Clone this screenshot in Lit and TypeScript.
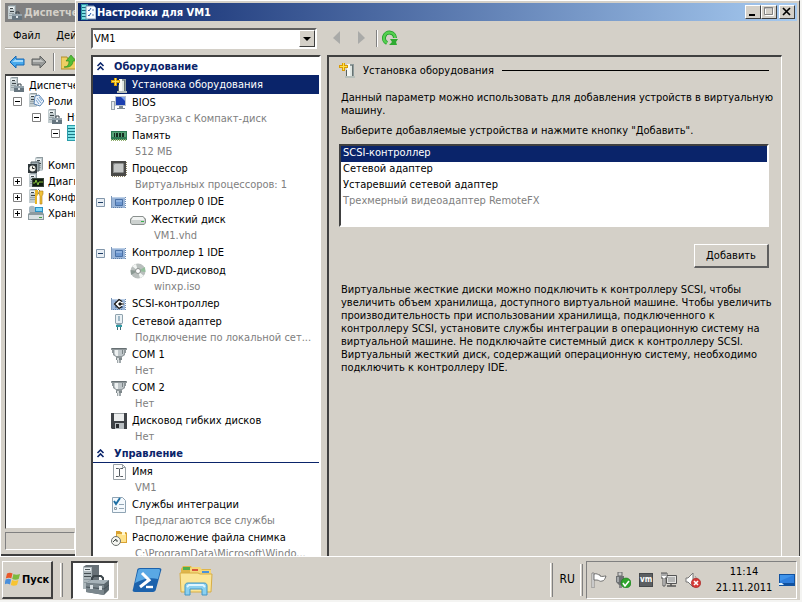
import { LitElement, html, svg, css, nothing, TemplateResult } from "lit";
import { customElement, property, state } from "lit/decorators.js";
import { classMap } from "lit/directives/class-map.js";

/* ---------- icons, all drawn on a 16 x 16 grid ---------- */

const tower = svg`
  <path d="M1 1l2-1h6v12l-1 2H1z" fill="#8f9ba0"/>
  <path d="M1 1h7v13H1z" fill="#c3cdd0"/>
  <path d="M2 2h5v2H2z" fill="#eef3f4"/><path d="M3 3h3v1H3zM3 6h4v1H3z" fill="#3c4548"/>
  <path d="M2 8h5v1H2zM2 10h5v1H2z" fill="#98a4a8"/>`;

const ideCard = svg`
  <path d="M0 2h1v12H0z" fill="#7d97b8"/>
  <path d="M1 3h13v11H1z" fill="#9ab5d8"/><path d="M1 3h13v1H1z" fill="#bccfe6"/>
  <path d="M4.500 5.500h7v6h-7z" fill="#6c96cf" stroke="#4a71a6"/>
  <path d="M5 6h6v2H5z" fill="#8fb1de"/>
  <path d="M14.500 3v11" stroke="#6d8bb0" stroke-dasharray="1 1"/>
  <path d="M2 13.500h10" stroke="#5f7fa8" stroke-dasharray="1 1"/>`;

const comPort = svg`
  <path d="M0 1h16v2h-1v3h-1v2l-3 2v1H5v-1L2 8V6H1V3H0z" fill="#8f979a"/>
  <path d="M1 1h14v1H1z" fill="#666f72"/><path d="M3 3h10v4l-2 2H5L3 7z" fill="#bfc6c9"/>
  <path d="M4 3h3v6H5L4 7z" fill="#eef1f1"/><path d="M11 3h1v4h-1z" fill="#7b8487"/>
  <path d="M5 11h6v2H5z" fill="#7e878a"/><path d="M6 11h2v2H6z" fill="#d5dadb"/>
  <path d="M6 13h4v3H6z" fill="#a0a8ab"/><path d="M7 13h1v3H7z" fill="#dfe3e4"/>`;

const glyphs: Record<string, TemplateResult> = {
  manager: svg`${tower}
    <path d="M9 9V7h3v2" fill="none" stroke="#38444c"/>
    <path d="M5 9h10v6H5z" fill="#66757f"/><path d="M5 9h10v2H5z" fill="#93a2ab"/>
    <path d="M9 11h2v2H9z" fill="#dfe6ea"/>`,
  vmSettings: svg`
    <path d="M1 0h7v16H1z" fill="#2c97a5"/><path d="M2 1h4v14H2z" fill="#7fe0e6"/>
    <path d="M2 3h5v1H2zM2 6h5v1H2zM2 9h5v1H2zM2 12h5v1H2z" fill="#176b7c"/>
    <path d="M6 2h8l2 2v11H6z" fill="#f8fbff" stroke="#7a93b2"/>
    <path d="M8 6l1 1 2-3M8 11l1 1 2-3" fill="none" stroke="#2458a8"/>
    <path d="M12 6h2M12 11h2" stroke="#6683ac"/>`,
  roles: svg`${tower}
    <path d="M7 3l4-1 5 6-4 5-6-2z" fill="#e9f1fa" stroke="#5e87b4"/>
    <path d="M9 5l4 5M8 7l3 4M11 4l3 4" stroke="#7aa5d2"/>`,
  vmHost: svg`
    <path d="M1 0h11v16H1z" fill="#2b9daa"/><path d="M2 1h7v14H2z" fill="#7ee3e8"/>
    <path d="M2 3h9v1H2zM2 6h9v1H2zM2 9h9v1H2zM2 12h9v1H2z" fill="#187685"/>`,
  components: svg`
    <g transform="translate(6 0)">${tower}</g>
    <path d="M3 5h8v9H3z" fill="#9eabb0" stroke="#566266"/>
    <path d="M0 7h9v9H0z" fill="#2e3639"/><circle cx="4.500" cy="11.500" r="3" fill="#f2f2ea"/>
    <path d="M4.500 9.500v2h2" fill="none" stroke="#222"/>`,
  diagnostics: svg`${tower}
    <path d="M4 5h12v9H4z" fill="#39463c"/><path d="M5 6h10v7H5z" fill="#101c10"/>
    <path d="M5 10h2l1-3 2 5 1-3h4" fill="none" stroke="#86c13d"/>`,
  configuration: svg`${tower}
    <path d="M7 1h3v5l-1 1v8H7z" fill="#e9b526"/><path d="M10 0l2 2-2 3" stroke="#6a7880" fill="none"/>
    <path d="M11 2h4v3l-1 2v8h-2V7l-1-2z" fill="#f0c23a" stroke="#b07a10" stroke-width=".6"/>`,
  storage: svg`
    <path d="M1 3c0-3 6-3 6 0v4H1z" fill="#a9b9c2"/><path d="M7 2h8v6H7z" fill="#2b91c6"/>
    <path d="M8 3h6v3H8z" fill="#7dd3f3"/><path d="M0 9l2-2h12l2 2v6H0z" fill="#8c9a9f"/>
    <path d="M1 10h14v4H1z" fill="#d9e0e2"/><path d="M11 12h3v1h-3z" fill="#43a042"/>`,
  addHardware: svg`
    <path d="M8 2h7v12H8z" fill="#8e9a9a"/><path d="M8 2h3v12H8z" fill="#f6f8f6"/>
    <path d="M11 4h2v10h-2z" fill="#dfe6e2"/><path d="M13 3h1v11h-1z" fill="#677272"/>
    <path d="M6 14h10v2H6z" fill="#b7bfba"/><path d="M7 8h1v6H7z" fill="#59625f"/>
    <path d="M3 1h3v2h3v3H6v3H3V6H0V3h3z" fill="#d99b06"/>
    <path d="M4 1h1v3h3v1H5v3H4V5H1V4h3z" fill="#ffe34f"/>`,
  bios: svg`
    <path d="M0 6h4v9H0z" fill="#9aa5ad"/><path d="M1 7h2v7H1z" fill="#e4e9ec"/>
    <path d="M4 1h11v10H4z" fill="#b9c2cc"/><path d="M5 2h9v8H5z" fill="#1c3fb0"/>
    <path d="M10 2h4v4z" fill="#7ea2ee"/><path d="M8 11h4v2h2v1H6v-1h2z" fill="#7e8a94"/>`,
  memory: svg`
    <path d="M0 3h16v9H0z" fill="#2d7a53"/><path d="M1 4h14v5H1z" fill="#57a276"/>
    <path d="M3 5h1v4H3zM5 5h2v4H5zM8 5h2v4H8zM11 5h2v4h-2z" fill="#152c20"/>
    <path d="M0 12h16" stroke="#8fae6a" stroke-dasharray="1 1" stroke-width="2"/>`,
  cpu: svg`
    <path d="M0 0h15v15H0z" fill="#4a4a48"/>
    <path d="M1 15.500h14M15.500 1v14" stroke="#8d8566" stroke-dasharray="1 1"/>
    <path d="M2 3l1-1h9l1 1v8l-1 1H2z" fill="#8b8d8c"/><path d="M4 3h8v8H3V4z" fill="#c4c6c5"/>`,
  ide: ideCard,
  hdd: svg`
    <path d="M3 4h10l3 3v4l-2 2H2l-2-2V7z" fill="#8a908e"/>
    <path d="M3 5h10l2 3H1z" fill="#f1f3f2"/><path d="M1 8h14v3l-1 1H2l-1-1z" fill="#ccd1cf"/>
    <path d="M11 9h3v1h-3z" fill="#37b14a"/>`,
  dvd: svg`
    <circle cx="8" cy="8" r="7.500" fill="#b9bfbd"/>
    <path d="M8 8L2 3l4-2zM8 8l6 5-4 2z" fill="#f3f6f4"/>
    <path d="M8 8l7-4 .4 5z" fill="#93bd9b"/><path d="M8 8l-7 4-.4-5z" fill="#8b9993"/>
    <circle cx="8" cy="8" r="2.500" fill="#fff" stroke="#8b918f"/>`,
  scsi: svg`${ideCard}
    <path d="M8 2.500l5.500 5.500L8 13.500 2.500 8z" fill="#fff"/>
    <path d="M11 5.500L8 3.500 3.500 8 8 12.500l3-2" fill="none" stroke="#111" stroke-width="1.300"/>
    <path d="M7 8l2-2 2 2-2 2z" fill="#111"/><path d="M10 8h3" stroke="#111"/>`,
  network: svg`
    <path d="M5 0h6l1 1v8l-2 2H6L4 9V1z" fill="#90a3ae"/><path d="M5 1h6v8H5z" fill="#e9f0f4"/>
    <path d="M7 2h2v5H7z" fill="#a0b8c7"/><path d="M5 11h6v2H5z" fill="#2f9aa3"/>
    <path d="M6 13h1v3H6zM9 13h1v3H9z" fill="#3f6f7a"/>`,
  com: comPort,
  floppy: svg`
    <path d="M0 0h16v16H1l-1-1z" fill="#3f4347"/><path d="M3 0h10v8H3z" fill="#eceeee"/>
    <path d="M3 0h10v1H3z" fill="#9da3a6"/><path d="M4 10h9v6H4z" fill="#b9bfc2"/>
    <path d="M5 11h3v4H5z" fill="#2a2d30"/>`,
  name: svg`
    <path d="M2.500.500h9l3 3v12h-12z" fill="#fdfdfd" stroke="#98a0a6"/>
    <path d="M11.500.500v3h3" fill="none" stroke="#98a0a6"/>
    <path d="M5 4.500h2.500L8.500 5l1-.5H12M8.500 5v7M5 12.500h2.500l1-.5 1 .5H12" fill="none" stroke="#545a60"/>`,
  services: svg`
    <path d="M1.500.500h10l3 3v12h-13z" fill="#f4f9fd" stroke="#8fa4b4"/>
    <path d="M3 4l2 3 4-6" fill="none" stroke="#1d6fa5" stroke-width="2"/>
    <path d="M3.500 10.500h2v2h-2z" fill="none" stroke="#8a9aa6"/>
    <path d="M8 7.500h5M8 11.500h5" stroke="#93a6b5"/>`,
  snapshot: svg`
    <path d="M5 1h4l1 1h5l1 1v10H5z" fill="#d9a232"/><path d="M6 4h9v8H6z" fill="#ffe28a"/>
    <path d="M11 2h3v3h-3z" fill="#fff6cf"/>
    <circle cx="5" cy="11" r="4.500" fill="#f5f6f2" stroke="#6b706c"/>
    <path d="M2 12l3-3v2h2" fill="none" stroke="#3c4441"/>`,
  back: svg`<path d="M1 8l6-6v3h8v6H7v3z" fill="#48a9ec" stroke="#1668b5"/><path d="M3 8l4-3v1h7v2z" fill="#a5dafb"/>`,
  forward: svg`<path d="M15 8L9 2v3H1v6h8v3z" fill="#989a99" stroke="#5f6160"/><path d="M13 8L9 5v1H2v2z" fill="#c3c4c2"/>`,
  up: svg`<path d="M0 3h6l1 2h9v10H0z" fill="#efcf63" stroke="#b08e2c"/>
    <path d="M3 13c4 0 5-3 5-6H5l5-6 5 6h-3c0 4-3 7-9 6z" fill="#53bf36" stroke="#26811a" stroke-width=".6"/>`,
  prev: svg`<path d="M11 1v13L4 8z" fill="#a9aaa8"/>`,
  next: svg`<path d="M5 1v13l7-6z" fill="#a9aaa8"/>`,
  refresh: svg`
    <path d="M5 13A5.500 5.500 0 1 1 13 8" fill="none" stroke="#1d9a28" stroke-width="4"/>
    <path d="M5 13A5.500 5.500 0 1 1 13 8" fill="none" stroke="#55cf4f" stroke-width="2.400"/>
    <path d="M8 9h8l-2 3 1 3H7l3-3z" fill="#2faa31"/>`,
  flag: svg`<path d="M1 1h2v15H1z" fill="#fff" stroke="#666" stroke-width=".7"/>
    <path d="M3 2c3-1 4 1 6 1v1c2 1 4 0 6 0-1 3-2 5-4 5-2 1-3-1-5-1H3z" fill="#fff" stroke="#555" stroke-width=".8"/>`,
  usb: svg`<path d="M3 0h4v4H3z" fill="#ccc" stroke="#666"/><path d="M1 4h8v6l-2 3H4l-3-3z" fill="#6d7072"/>
    <path d="M2 5h2v5H2z" fill="#a4a7a9"/><path d="M4 13h3v3H4z" fill="#888"/>
    <circle cx="11" cy="11" r="5" fill="#2fa52b" stroke="#16751a" stroke-width=".6"/>
    <path d="M8 11l2 3 4-5" fill="none" stroke="#fff" stroke-width="1.600"/>`,
  lan: svg`<path d="M5.500 3.500h10v8h-10z" fill="#e5e5e3" stroke="#555"/><path d="M7 5h7v5H7z" fill="#b6b7b6"/>
    <path d="M6 14h9M10 12v2" stroke="#555" stroke-width="1.500"/>
    <path d="M0 1h6v5H4v8H2V6H0z" fill="#fff" stroke="#555"/><path d="M2 1v3M4 1v3" stroke="#555"/>`,
  speaker: svg`<path d="M1 6h2l5-5v14l-5-5H1z" fill="#fff" stroke="#777"/>
    <path d="M10 4c2 2 2 6 0 8" fill="none" stroke="#999"/>
    <circle cx="11" cy="11" r="4.700" fill="#d63a36" stroke="#a01c1c" stroke-width=".6"/>
    <path d="M9 9l4 4M13 9l-4 4" stroke="#fff" stroke-width="1.600"/>`,
  desktop: svg`<path d="M0 2h16v12H0z" fill="#10519f"/><path d="M1 3h14v8H1z" fill="#2f7fdd"/>
    <path d="M1 3h14L1 9z" fill="#3f93ea"/><path d="M0 11h3l2 2H0z" fill="#d7eefc"/>`,
  windows: svg`
    <path d="M2 2.500C4 1.500 6 1.500 7.500 2.500L6.300 7.500C5 6.500 3 6.500 .8 7.500z" fill="#e8582a"/>
    <path d="M8.500 3C10 4 12.500 4 15 3l-1.300 5C12 9 9 9 7.200 8z" fill="#7cba3d"/>
    <path d="M.6 8.500c2-1 4-1 5.500 0L5 13.500c-1.500-1-3.500-1-5.600 0z" fill="#4a8fdb"/>
    <path d="M7 9c2 1 4 1 6.500 0L12 14c-2 1-4.500 1-6.200 0z" fill="#f7c432"/>`,
};

const icon = (name: string, cls = "i16") =>
  html`<svg class=${cls} viewBox="0 0 16 16" aria-hidden="true">${glyphs[name]}</svg>`;

const chevrons = html`<svg class="chev" viewBox="0 0 8 9" aria-hidden="true">
  <path d="M1 4l3-3 3 3M1 8l3-3 3 3" fill="none" stroke="#0a246a" stroke-width="1.600"/></svg>`;

const shared = css`
  * { box-sizing: border-box; }
  :host { box-sizing: border-box; }
  button, select, a {
    font: inherit; color: inherit; margin: 0; padding: 0; border: 0; border-radius: 0;
    background: none; text-decoration: none;
  }
  ul { list-style: none; margin: 0; padding: 0; }
  svg { display: block; flex: none; }
  .i16 { width: 16px; height: 16px; }
`;

/* ---------- server manager window, mostly covered by the dialog ---------- */

interface Node { label: string; icon: string; depth: number; box?: "+" | "-"; gap?: boolean }

const managerTree: Node[] = [
  { label: "Диспетчер сервера", icon: "manager", depth: 0 },
  { label: "Роли", icon: "roles", depth: 1, box: "-" },
  { label: "Hyper-V", icon: "manager", depth: 2, box: "-" },
  { label: "", icon: "vmHost", depth: 3, box: "-" },
  { label: "Компоненты", icon: "components", depth: 1, gap: true },
  { label: "Диагностика", icon: "diagnostics", depth: 1, box: "+" },
  { label: "Конфигурация", icon: "configuration", depth: 1, box: "+" },
  { label: "Хранилище", icon: "storage", depth: 1, box: "+" },
];

@customElement("manager-window")
export class ManagerWindow extends LitElement {
  static styles = [shared, css`
    :host {
      display: flex; flex-direction: column; min-width: 0; min-height: 0; overflow: hidden;
      padding: 3px 0 0 4px; white-space: nowrap;
      border-left: 1px solid #fff; background: #d4d0c8;
    }
    .title {
      flex: none; display: flex; align-items: center; gap: 1px; height: 19px; padding-left: 2px;
      background: #808080; color: #d4d0c8; font-weight: bold;
    }
    .title span, .row span { min-width: 0; overflow: hidden; }
    .menu { flex: none; display: flex; align-items: center; gap: 16px; height: 26px; padding: 2px 0 0 8px;
      overflow: hidden; border-bottom: 1px solid #b5b1a8; }
    .tools { flex: none; display: flex; align-items: center; gap: 6px; height: 26px; padding-left: 4px;
      border-top: 1px solid #fff; }
    .tools i { flex: none; width: 2px; height: 18px; border-left: 1px solid #808080; border-right: 1px solid #fff; }
    .tree { flex: 1; min-height: 0; overflow: hidden; padding: 1px 0 0 3px; background: #fff;
      border: solid #404040; border-width: 2px 0 0 1px; border-bottom: 1px solid #d4d0c8; }
    .row { display: flex; align-items: center; height: 16px; gap: 4px; }
    .gap { margin-top: 16px; }
    .d1 { padding-left: 4px; } .d2 { padding-left: 23px; } .d3 { padding-left: 42px; }
    .box, .nobox { width: 9px; height: 9px; flex: none; margin-right: 2px; }
    .box svg { width: 9px; height: 9px; }
    .status { flex: none; height: 18px; margin: 3px 0 2px; border: 1px solid; border-color: #808080 #fff #fff #808080; }
    .edge { flex: none; height: 4px; border-bottom: 2px solid #404040; margin-left: -4px; }
  `];

  render() {
    return html`
      <div class="title">${icon("manager")}<span>Диспетчер сервера</span></div>
      <nav class="menu"><button>Файл</button><button>Действие</button></nav>
      <div class="tools">
        <button aria-label="Назад">${icon("back")}</button>
        <button aria-label="Вперед">${icon("forward")}</button>
        <i></i>
        <button aria-label="Вверх">${icon("up")}</button>
      </div>
      <ul class="tree">
        ${managerTree.map((n) => html`
          <li class=${classMap({ row: true, gap: !!n.gap, ["d" + n.depth]: true })}>
            ${n.box
              ? html`<button class="box" aria-label="Развернуть"><svg viewBox="0 0 9 9">
                  <path d="M.5.500h8v8h-8z" fill="#fff" stroke="#808080"/>
                  <path d=${n.box === "+" ? "M2 4.500h5M4.500 2v5" : "M2 4.500h5"} stroke="#000"/></svg></button>`
              : n.depth ? html`<span class="nobox"></span>` : nothing}
            ${icon(n.icon)}<span>${n.label}</span>
          </li>`)}
      </ul>
      <div class="status"></div>
      <div class="edge"></div>`;
  }
}

/* ---------- virtual machine settings dialog ---------- */

interface Item { label: string; icon: string; sub?: string; child?: boolean; open?: boolean }

const sections: { title: string; items: Item[] }[] = [
  {
    title: "Оборудование",
    items: [
      { label: "Установка оборудования", icon: "addHardware" },
      { label: "BIOS", icon: "bios", sub: "Загрузка с Компакт-диск" },
      { label: "Память", icon: "memory", sub: "512 МБ" },
      { label: "Процессор", icon: "cpu", sub: "Виртуальных процессоров: 1" },
      { label: "Контроллер 0 IDE", icon: "ide", open: true },
      { label: "Жесткий диск", icon: "hdd", sub: "VM1.vhd", child: true },
      { label: "Контроллер 1 IDE", icon: "ide", open: true },
      { label: "DVD-дисковод", icon: "dvd", sub: "winxp.iso", child: true },
      { label: "SCSI-контроллер", icon: "scsi" },
      { label: "Сетевой адаптер", icon: "network", sub: "Подключение по локальной сет..." },
      { label: "COM 1", icon: "com", sub: "Нет" },
      { label: "COM 2", icon: "com", sub: "Нет" },
      { label: "Дисковод гибких дисков", icon: "floppy", sub: "Нет" },
    ],
  },
  {
    title: "Управление",
    items: [
      { label: "Имя", icon: "name", sub: "VM1" },
      { label: "Службы интеграции", icon: "services", sub: "Предлагаются все службы" },
      { label: "Расположение файла снимка", icon: "snapshot", sub: "C:\\ProgramData\\Microsoft\\Windo..." },
    ],
  },
];

@customElement("settings-dialog")
export class SettingsDialog extends LitElement {
  @state() private selected = "Установка оборудования";

  static styles = [shared, css`
    :host {
      display: flex; flex-direction: column; min-width: 0; min-height: 0; overflow: hidden;
      padding: 2px 2px 0 2px; background: #d4d0c8;
      border: solid #fff; border-width: 1px 0 0 1px; border-right: 1px solid #404040;
    }
    .title {
      flex: none; display: flex; align-items: center; gap: 1px; height: 18px; padding: 0 2px;
      background: linear-gradient(90deg, #0a246a, #a6caf0); color: #fff; font-weight: bold;
    }
    .title h1 { flex: 1; margin: 0; font: inherit; }
    .ctl { width: 16px; height: 14px; background: #d4d0c8; border: 1px solid; border-color: #fff #404040 #404040 #fff; }
    .ctl svg { width: 14px; height: 12px; }
    .caption { display: flex; }
    .caption .close { margin-left: 2px; }
    .bar { flex: none; display: flex; align-items: center; height: 29px; padding: 5px 0 0 13px; margin-bottom: 5px; }
    .combo { display: grid; width: 226px; height: 21px; background: #fff;
      border: 2px solid; border-color: #606060 #fff #fff #606060; }
    .combo > * { grid-area: 1 / 1; }
    .combo select { appearance: none; padding: 0 20px 0 1px; width: 100%; outline: 0; }
    .drop { justify-self: end; width: 16px; height: 17px; pointer-events: none; background: #d4d0c8;
      border: 1px solid; border-color: #fff #404040 #404040 #fff; }
    .drop svg { width: 14px; height: 15px; }
    .nav { display: flex; align-items: center; gap: 8px; padding-left: 12px; }
    .nav i { width: 2px; height: 17px; margin: 0 -4px 0 -1px; border-left: 1px solid #808080; border-right: 1px solid #fff; }
    .body { flex: 1; min-height: 0; display: grid; grid-template-columns: 230px minmax(0, 1fr); gap: 6px;
      padding: 0 15px 0 13px; }
    .list { overflow: hidden; white-space: nowrap; background: #fff; padding-top: 1px;
      border: solid #404040; border-width: 2px 0 0 2px; border-right: 2px solid #fff; }
    .head { display: flex; align-items: center; gap: 9px; width: 100%; height: 18px; padding-left: 3px;
      border-bottom: 1px solid #0a246a; color: #0a246a; font-weight: bold; text-align: left; }
    .chev { width: 9px; height: 9px; }
    .item { display: grid; grid-template-columns: 10px 16px 1fr; column-gap: 5px; align-items: center;
      grid-template-rows: 18px; padding-left: 3px; cursor: default; }
    .child { padding-left: 22px; }
    .sel { background: #0a246a; color: #fff; }
    .tog { width: 9px; height: 9px; }
    .tog svg { width: 9px; height: 9px; }
    .lab { grid-column: 3; grid-row: 1; text-align: left; line-height: 18px; }
    .item .i16 { grid-column: 2; grid-row: 1; }
    .sub { grid-column: 3; padding-left: 3px; line-height: 13px; height: 15px; color: #808080; }
    .page { display: flex; flex-direction: column; min-width: 0; padding: 5px 12px 0 10px; line-height: 13px;
      border: solid #404040; border-width: 2px 1px 0 2px; border-right-color: #fff; }
    .page h2 { display: flex; align-items: center; gap: 8px; margin: 0; height: 16px; font: inherit; }
    .page h2::after { content: ""; flex: 1; height: 1px; background: #000; }
    .page p { margin: 0 -10px 0 2px; }
    .page .intro { margin-top: 13px; }
    .page label { margin: 7px 0 7px 2px; }
    .devices { display: block; width: 100%; height: 83px; background: #fff; outline: 0; overflow: hidden;
      border: 2px solid; border-color: #404040 #fff #fff #404040; }
    .devices option { height: 16px; min-height: 16px; line-height: 16px; padding: 0 2px; color: #000; }
    .devices option:checked { background: linear-gradient(#0a246a, #0a246a); color: #fff; }
    .devices option:disabled { color: #808080; }
    .add { align-self: flex-end; width: 75px; height: 24px; margin: 17px 0 15px;
      border: solid; border-width: 1px 2px 2px 1px; border-color: #fff #606060 #606060 #fff; background: #d4d0c8; }
  `];

  private item(it: Item) {
    return html`
      <li class=${classMap({ item: true, child: !!it.child, sel: it.label === this.selected })}>
        ${it.open
          ? html`<button class="tog" aria-label="Свернуть"><svg viewBox="0 0 9 9">
              <path d="M.5.500h8v8h-8z" fill="#e8eef4" stroke="#8296aa"/><path d="M2 4.500h5" stroke="#1c3c64"/></svg></button>`
          : nothing}
        ${icon(it.icon)}
        <button class="lab" @click=${() => (this.selected = it.label)}>${it.label}</button>
        ${it.sub ? html`<span class="sub">${it.sub}</span>` : nothing}
      </li>`;
  }

  render() {
    return html`
      <header class="title">
        ${icon("vmSettings")}
        <h1>Настройки для VM1</h1>
        <div class="caption">
          <button class="ctl" aria-label="Свернуть"><svg viewBox="0 0 14 12"><path d="M3 8h6v2H3z"/></svg></button>
          <button class="ctl" aria-label="Развернуть"><svg viewBox="0 0 14 12">
            <path d="M3.500 2.500h8v7h-8z" fill="none" stroke="#fff"/><path d="M2.500 1.500h8v7h-8zM2 2h9" fill="none" stroke="#808080"/></svg></button>
          <button class="ctl close" aria-label="Закрыть"><svg viewBox="0 0 14 12">
            <path d="M3 2l7 7M10 2L3 9" stroke="#000" stroke-width="1.700"/></svg></button>
        </div>
      </header>
      <div class="bar">
        <div class="combo">
          <select aria-label="Виртуальная машина"><option>VM1</option></select>
          <span class="drop"><svg viewBox="0 0 14 15"><path d="M3 6h8l-4 4z"/></svg></span>
        </div>
        <div class="nav">
          <button aria-label="Назад">${icon("prev")}</button>
          <button aria-label="Вперед">${icon("next")}</button>
          <i></i>
          <button aria-label="Обновить">${icon("refresh")}</button>
        </div>
      </div>
      <div class="body">
        <div class="list">
          ${sections.map((s) => html`
            <button class="head">${chevrons}${s.title}</button>
            <ul>${s.items.map((it) => this.item(it))}</ul>`)}
        </div>
        <section class="page">
          <h2>${icon("addHardware")}Установка оборудования</h2>
          <p class="intro">Данный параметр можно использовать для добавления устройств в виртуальную
            машину.</p>
          <label for="devices">Выберите добавляемые устройства и нажмите кнопку "Добавить".</label>
          <select id="devices" class="devices" size="5">
            <option selected>SCSI-контроллер</option>
            <option>Сетевой адаптер</option>
            <option>Устаревший сетевой адаптер</option>
            <option disabled>Трехмерный видеоадаптер RemoteFX</option>
          </select>
          <button class="add">Добавить</button>
          <p>Виртуальные жесткие диски можно подключить к контроллеру SCSI, чтобы<br>
            увеличить объем хранилища, доступного виртуальной машине. Чтобы увеличить<br>
            производительность при использовании хранилища, подключенного к<br>
            контроллеру SCSI, установите службы интеграции в операционную систему на<br>
            виртуальной машине. Не подключайте системный диск к контроллеру SCSI.<br>
            Виртуальный жесткий диск, содержащий операционную систему, необходимо<br>
            подключить к контроллеру IDE.</p>
        </section>
      </div>`;
  }
}

/* ---------- taskbar ---------- */

@customElement("task-bar")
export class TaskBar extends LitElement {
  @property() time = "11:14";
  @property() date = "21.11.2011";

  static styles = [shared, css`
    :host { display: flex; align-items: center; height: 44px; padding: 3px 3px 0 2px;
      background: #d4d0c8; box-shadow: inset 0 1px #fff; }
    .start { display: flex; align-items: center; gap: 1px; width: 51px; height: 38px; padding-left: 2px;
      border: solid; border-width: 1px 2px 2px 1px; border-color: #fff #404040 #404040 #fff;
      font-weight: bold; }
    .grip { width: 3px; height: 34px; border: solid; border-width: 0 1px 0 1px; border-color: #fff #808080 #fff #fff; }
    .g1 { margin: 0 8px 0 7px; }
    .tasks { flex: 1; display: flex; align-items: center; gap: 14px; }
    .active { display: flex; align-items: center; justify-content: center; width: 47px; height: 38px; background: #fff;
      border: solid; border-width: 2px 1px 1px 2px; border-color: #404040 #fff #fff #404040;
      box-shadow: inset -3px 0 #d4d0c8; }
    .big { width: 30px; height: 32px; }
    .ex { width: 34px; height: 32px; margin-left: 3px; }
    .lang { margin: 0 5px 0 7px; font-size: 12px; }
    .g2 { height: 32px; margin-right: 3px; }
    .tray { display: flex; align-items: center; gap: 8px; height: 38px; padding: 0 1px 0 4px;
      border: 1px solid; border-color: #808080 #fff #fff #808080; }
    .vm { width: 14px; height: 14px; background: #5c5f62; color: #fff; font-size: 8px; font-weight: bold;
      line-height: 11px; text-align: center; border: 1px solid #45484a; }
    .clock { width: 62px; margin-left: 4px; margin-right: -4px; text-align: center; line-height: 16px; }
  `];

  render() {
    return html`
      <button class="start">${icon("windows")}Пуск</button>
      <span class="grip g1"></span>
      <div class="tasks">
        <button class="active" aria-label="Диспетчер сервера">
          <svg class="big" viewBox="0 0 30 32">
            <path d="M3 3l3-2h13v19l-3 3H3z" fill="#687177"/><path d="M3 3h9v22H3z" fill="#aeb8bc"/>
            <path d="M4 4h7v3H4z" fill="#e5eaec"/><path d="M5 5h5v1H5zM4 9h7v1H4zM4 12h7v1H4z" fill="#444d51"/>
            <path d="M4 15h7v1H4zM4 18h7v1H4z" fill="#8c979c"/>
            <path d="M12 17v-3l2-2h7l2 2v3" fill="none" stroke="#3d464b" stroke-width="2"/>
            <path d="M6 19l5-3h18v10l-5 5-18-3z" fill="#5a666c"/><path d="M6 19l5-3h18l-5 4z" fill="#a7b3b9"/>
            <path d="M6 19l18 2v10L6 28z" fill="#7b878d"/><path d="M6 23l18 2 5-4" fill="none" stroke="#455057"/>
            <path d="M10 21h3v4h-3zM19 22h3v4h-3z" fill="#dbe2e5"/>
          </svg>
        </button>
        <button aria-label="Windows PowerShell">
          <svg class="big" viewBox="0 0 30 32">
            <path d="M8 4h19c2 0 3 1 2 3l-5 18c0 2-2 3-3 3H3c-2 0-3-1-2-3L5 7c0-2 1-3 3-3z" fill="#1c62ac"/>
            <path d="M8 5h19c1 0 1 1 1 2l-2 8C18 13 11 15 3 19L6 7c0-1 1-2 2-2z" fill="#5aa8e4"/>
            <path d="M10 9l7 7-9 7" fill="none" stroke="#fff" stroke-width="3"/>
            <path d="M14 23h7" stroke="#fff" stroke-width="2.400"/>
          </svg>
        </button>
        <button aria-label="Проводник">
          <svg class="ex" viewBox="0 0 34 32">
            <path d="M2 5l2-3h8l2 3h18v22H2z" fill="#dfb54a"/><path d="M11 4l2-1h8l2 3h9v8H11z" fill="#f4d778"/>
            <path d="M4 3h7v3H4z" fill="#4fae4b"/><path d="M13 5h6v2h-6z" fill="#d8563c"/><path d="M23 7h7v2h-7z" fill="#4c92d8"/>
            <path d="M1 9h18l2 1h12l-1 18H2z" fill="#fbe596" stroke="#d7ad45"/>
            <path d="M6 31V22c0-2 1-3 3-3h16c2 0 3 1 3 3v9h-5v-6H11v6z" fill="#8bd0ef" stroke="#4296c6"/>
            <path d="M8 23l2-2h14l2 2" fill="none" stroke="#dff5ff" stroke-width="2"/>
          </svg>
        </button>
      </div>
      <span class="grip"></span>
      <span class="lang">RU</span>
      <span class="grip g2"></span>
      <div class="tray">
        ${icon("flag")}${icon("usb")}<span class="vm">vm</span>${icon("lan")}${icon("speaker")}
        <div class="clock"><div>${this.time}</div><div>${this.date}</div></div>
        ${icon("desktop")}
      </div>`;
  }
}

@customElement("app-root")
export class AppRoot extends LitElement {
  static styles = css`
    :host {
      display: grid; grid-template: minmax(0, 1fr) auto / 75px minmax(0, 1fr);
      height: 100vh; box-sizing: border-box; padding: 0 2px 2px 0; overflow: hidden;
      background: #f4f4f2; color: #000;
      font: 11px/13px Tahoma, "DejaVu Sans Condensed", "DejaVu Sans", sans-serif;
    }
    task-bar { grid-column: 1 / -1; }
  `;

  render() {
    return html`
      <manager-window></manager-window>
      <settings-dialog></settings-dialog>
      <task-bar></task-bar>`;
  }
}
